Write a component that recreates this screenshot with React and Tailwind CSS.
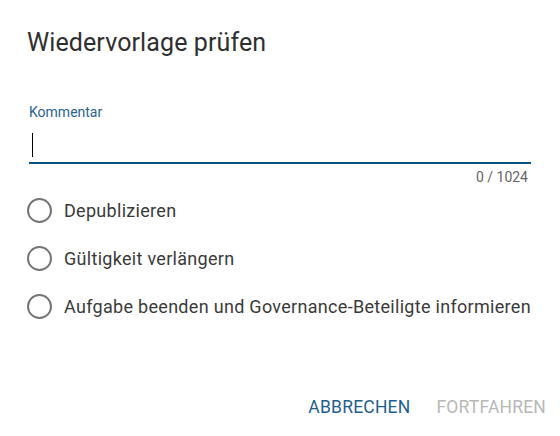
import React, { useState } from "react";

const options = [
  "Depublizieren",
  "Gültigkeit verlängern",
  "Aufgabe beenden und Governance-Beteiligte informieren",
];

const App = () => {
  const [comment, setComment] = useState("");
  const [choice, setChoice] = useState(null);

  return (
    <div className="w-[560px] h-[436px] bg-white font-['Roboto',sans-serif] flex flex-col">
      <h1 className="pl-[27px] pt-[27px] text-[25px] leading-[32px] text-[#303030] font-normal tracking-[0.1px]">
        Wiedervorlage prüfen
      </h1>

      <div className="pl-[29px] pr-[29px] mt-[45px]">
        <label className="block text-[14px] leading-[16px] text-[#2a6391]">Kommentar</label>
        <div className="relative h-[38px] mt-[4px]">
          <input
            autoFocus
            value={comment}
            maxLength={1024}
            onChange={(e) => setComment(e.target.value)}
            className="w-full h-full outline-none text-[18px] text-[#212121] pl-[3px] caret-transparent"
          />
          <span className="absolute left-[3px] top-[9px] w-px h-[24px] bg-black" />
        </div>
        <div className="h-[2px] bg-[#0b5283]" />
        <div className="text-right text-[14px] leading-[16px] text-[#666666] mt-[5px] pr-[3px]">
          {comment.length} / 1024
        </div>
      </div>

      <div className="flex flex-col gap-[23px] pl-[27px] mt-[13px]">
        {options.map((opt, i) => (
          <label key={opt} className="flex items-center gap-[12px] cursor-pointer">
            <span
              onClick={() => setChoice(i)}
              className="w-[25px] h-[25px] rounded-full border-2 border-[#757575] flex items-center justify-center"
            >
              {choice === i && <span className="w-[12px] h-[12px] rounded-full bg-[#0b5283]" />}
            </span>
            <span className="text-[18px] leading-[24px] text-[#3a3a3a] tracking-[0.3px]">{opt}</span>
          </label>
        ))}
      </div>

      <div className="mt-auto mb-[19px] flex justify-end gap-[26px] pr-[14px]">
        <button className="text-[17.5px] leading-[20px] text-[#1f5f8f] tracking-[0.2px]">ABBRECHEN</button>
        <button className="text-[17.5px] leading-[20px] text-[#b8b8b8] tracking-[0.2px]">FORTFAHREN</button>
      </div>
    </div>
  );
};

export default App;
